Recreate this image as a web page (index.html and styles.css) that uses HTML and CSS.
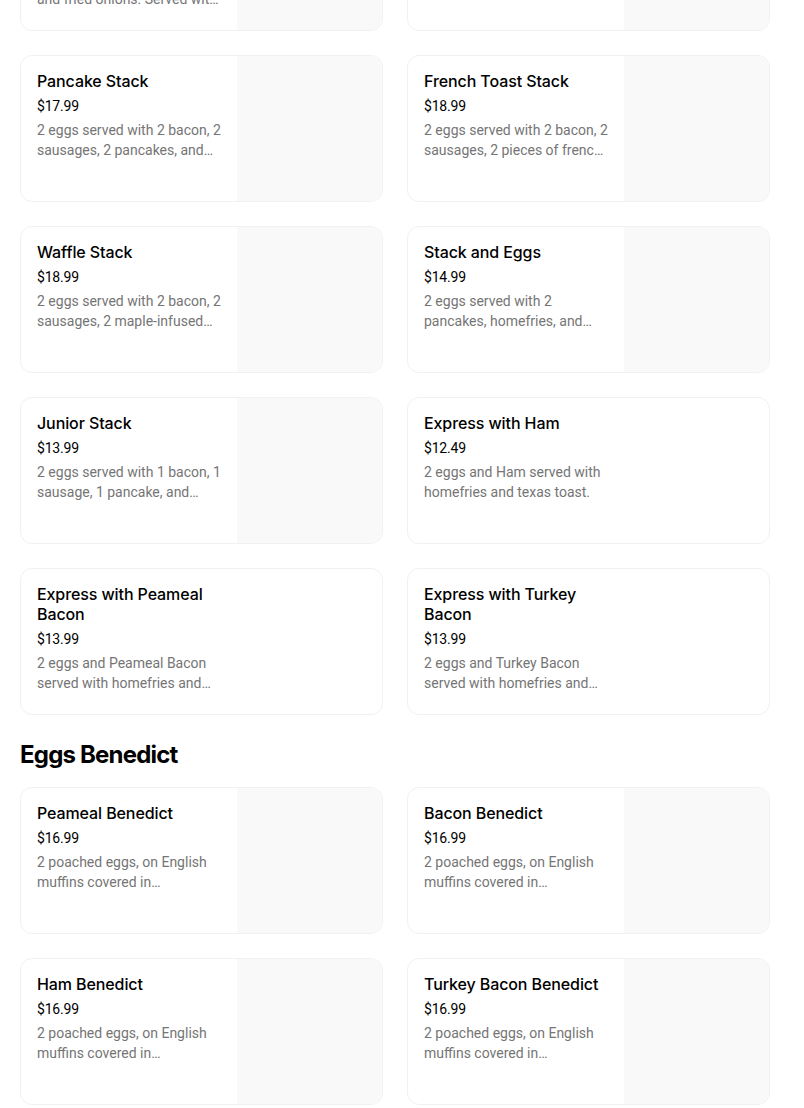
FILE: index.html
```html
<!DOCTYPE html>
<html>
<head>
<meta charset="utf-8">
<link rel="stylesheet" href="styles.css">
</head>
<body>
<main class="menu">
  <section class="section section-first">
    <div class="grid">
      <div class="card">
        <div class="info">
          <h3 class="title">Western Omelette Breakfast</h3>
          <div class="price">$15.99</div>
          <p class="desc">Scrambled eggs with peppers and fried onions. Served with homefries and texas toast.</p>
        </div>
        <div class="thumb"></div>
      </div>
      <div class="card">
        <div class="info">
          <h3 class="title">Breakfast Special</h3>
          <div class="price">$12.99</div>
          <p class="desc">2 eggs with toast.</p>
        </div>
        <div class="thumb"></div>
      </div>
      <div class="card">
        <div class="info">
          <h3 class="title">Pancake Stack</h3>
          <div class="price">$17.99</div>
          <p class="desc">2 eggs served with 2 bacon, 2 sausages, 2 pancakes, and homefries.</p>
        </div>
        <div class="thumb"></div>
      </div>
      <div class="card">
        <div class="info">
          <h3 class="title">French Toast Stack</h3>
          <div class="price">$18.99</div>
          <p class="desc">2 eggs served with 2 bacon, 2 sausages, 2 pieces of french toast, and homefries.</p>
        </div>
        <div class="thumb"></div>
      </div>
      <div class="card">
        <div class="info">
          <h3 class="title">Waffle Stack</h3>
          <div class="price">$18.99</div>
          <p class="desc">2 eggs served with 2 bacon, 2 sausages, 2 maple-infused waffles, and homefries.</p>
        </div>
        <div class="thumb"></div>
      </div>
      <div class="card">
        <div class="info">
          <h3 class="title">Stack and Eggs</h3>
          <div class="price">$14.99</div>
          <p class="desc">2 eggs served with 2 pancakes, homefries, and your choice of meat.</p>
        </div>
        <div class="thumb"></div>
      </div>
      <div class="card">
        <div class="info">
          <h3 class="title">Junior Stack</h3>
          <div class="price">$13.99</div>
          <p class="desc">2 eggs served with 1 bacon, 1 sausage, 1 pancake, and homefries.</p>
        </div>
        <div class="thumb"></div>
      </div>
      <div class="card">
        <div class="info">
          <h3 class="title">Express with Ham</h3>
          <div class="price">$12.49</div>
          <p class="desc">2 eggs and Ham served with homefries and texas toast.</p>
        </div>
      </div>
      <div class="card">
        <div class="info">
          <h3 class="title">Express with Peameal Bacon</h3>
          <div class="price">$13.99</div>
          <p class="desc">2 eggs and Peameal Bacon served with homefries and texas toast.</p>
        </div>
      </div>
      <div class="card">
        <div class="info">
          <h3 class="title">Express with Turkey Bacon</h3>
          <div class="price">$13.99</div>
          <p class="desc">2 eggs and Turkey Bacon served with homefries and texas toast.</p>
        </div>
      </div>
    </div>
  </section>

  <section class="section">
    <h2 class="section-title">Eggs Benedict</h2>
    <div class="grid">
      <div class="card">
        <div class="info">
          <h3 class="title">Peameal Benedict</h3>
          <div class="price">$16.99</div>
          <p class="desc">2 poached eggs, on English muffins covered in hollandaise sauce with peameal bacon.</p>
        </div>
        <div class="thumb"></div>
      </div>
      <div class="card">
        <div class="info">
          <h3 class="title">Bacon Benedict</h3>
          <div class="price">$16.99</div>
          <p class="desc">2 poached eggs, on English muffins covered in hollandaise sauce with bacon.</p>
        </div>
        <div class="thumb"></div>
      </div>
      <div class="card">
        <div class="info">
          <h3 class="title">Ham Benedict</h3>
          <div class="price">$16.99</div>
          <p class="desc">2 poached eggs, on English muffins covered in hollandaise sauce with ham.</p>
        </div>
        <div class="thumb"></div>
      </div>
      <div class="card">
        <div class="info">
          <h3 class="title">Turkey Bacon Benedict</h3>
          <div class="price">$16.99</div>
          <p class="desc">2 poached eggs, on English muffins covered in hollandaise sauce with turkey bacon.</p>
        </div>
        <div class="thumb"></div>
      </div>
    </div>
  </section>
</main>
</body>
</html>
```

FILE: styles.css
```css
html, body {
  margin: 0;
  padding: 0;
  background: #ffffff;
}

body {
  font-family: "Inter", "Liberation Sans", sans-serif;
  color: #000000;
  overflow: hidden;
}

.menu {
  width: 750px;
  margin-left: 20px;
}

.section-first {
  margin-top: -116px;
}

.section-title {
  margin: 24px 0 16px;
  font-size: 24px;
  line-height: 32px;
  font-weight: 700;
  letter-spacing: -0.8px;
}

.grid {
  display: grid;
  grid-template-columns: 1fr 1fr;
  column-gap: 24px;
  row-gap: 24px;
}

.card {
  display: flex;
  height: 147px;
  box-sizing: border-box;
  border: 1px solid #f1f1f1;
  border-radius: 12px;
  overflow: hidden;
  background: #ffffff;
}

.info {
  width: 216px;
  flex: none;
  box-sizing: border-box;
  padding: 15px 16px 0 16px;
}

.thumb {
  flex: 1;
  background: #f9f9f9;
}

.title {
  margin: 0 0 5px;
  font-size: 16px;
  line-height: 20px;
  font-weight: 500;
  letter-spacing: -0.1px;
}

.price {
  font-family: "Roboto", "Liberation Sans", sans-serif;
  font-size: 14px;
  line-height: 20px;
  margin-bottom: 4px;
  letter-spacing: -0.2px;
}

.desc {
  margin: 0;
  font-family: "Roboto", "Liberation Sans", sans-serif;
  font-size: 14px;
  line-height: 20px;
  color: #757575;
  display: -webkit-box;
  -webkit-line-clamp: 2;
  -webkit-box-orient: vertical;
  overflow: hidden;
}
```
